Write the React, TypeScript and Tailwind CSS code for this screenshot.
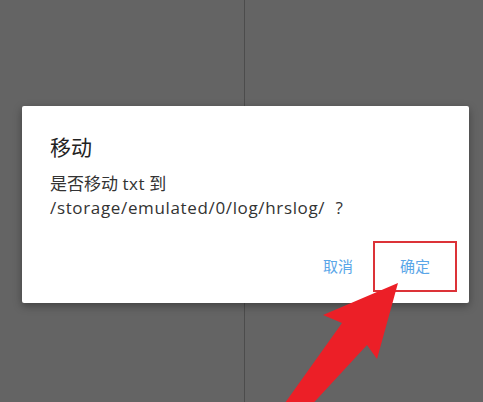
export default function App() {
  return (
    <div className="relative w-[483px] h-[402px] overflow-hidden bg-[#646464] font-['Open_Sans','Noto_Sans_CJK_SC',sans-serif]">
      {/* Background panes behind the dialog */}
      <div className="flex h-full">
        <div className="w-[245px] h-full border-r border-[#4c4c4c]" />
        <div className="flex-1 h-full" />
      </div>

      {/* Dialog */}
      <div className="absolute left-[22px] top-[106px] w-[447px] h-[197px] bg-white rounded-[2px] shadow-[0_3px_8px_rgba(0,0,0,0.35)] flex flex-col">
        <div className="pl-[28px] pt-[27px]">
          <h2 className="text-[21px] leading-[28px] text-[#222222]">移动</h2>
          <p className="mt-[11px] text-[17px] leading-[24px] text-[#333333]">
            是否移动 <span className="tracking-[0.5px]">txt</span> 到
            <br />
            <span className="tracking-[0.65px]">
              /storage/emulated/0/log/hrslog/{"\u00a0\u00a0"}?
            </span>
          </p>
        </div>
        <div className="mt-auto flex items-center justify-end gap-[20px] pr-[12px] pb-[11px]">
          <button className="text-[15px] text-[#5aa6e8]">取消</button>
          <button className="w-[84px] h-[51px] border-2 border-[#dc3238] text-[15px] text-[#5aa6e8]">
            确定
          </button>
        </div>
      </div>

      {/* Annotation arrow */}
      <svg
        className="absolute inset-0"
        width="483"
        height="402"
        viewBox="0 0 483 402"
      >
        <polygon
          points="398,283 323,315 342,323 270,424 294,424 367,345 377,359"
          fill="#ec1f27"
        />
      </svg>
    </div>
  );
}
